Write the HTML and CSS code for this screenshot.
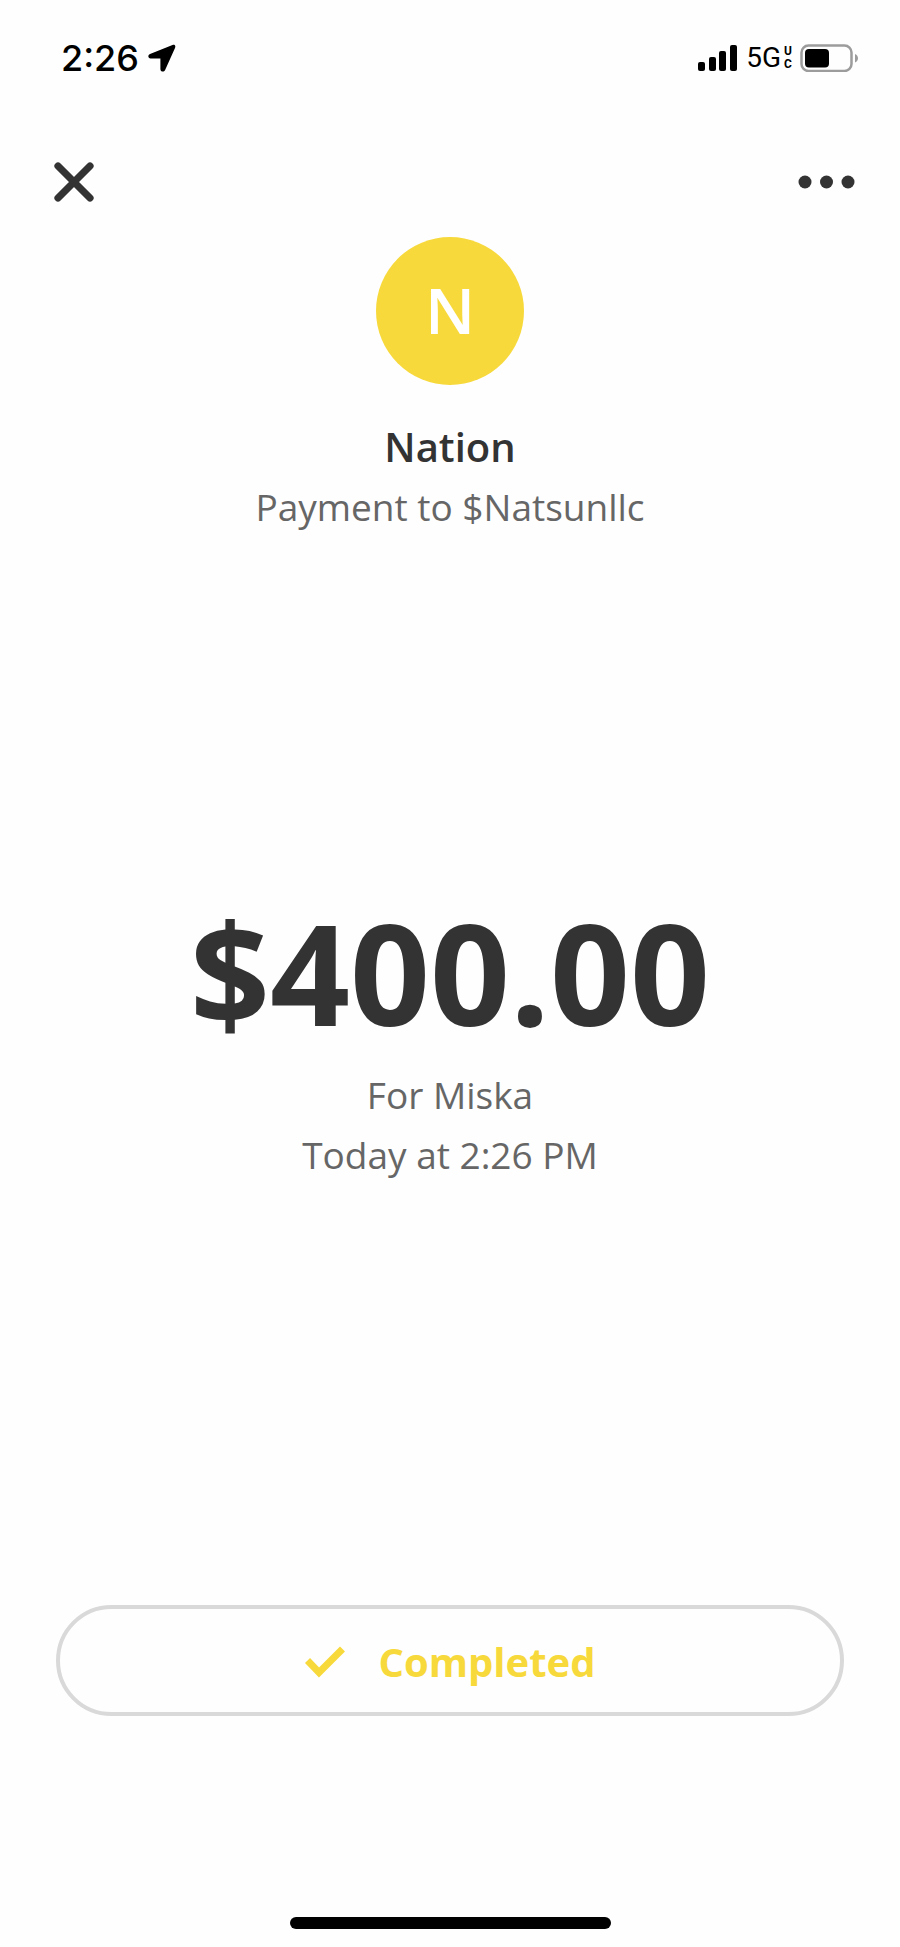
FILE: index.html
```html
<!DOCTYPE html>
<html lang="en">
<head>
<meta charset="utf-8">
<meta name="viewport" content="width=device-width, initial-scale=1">
<title>Payment to $Natsunllc</title>
<link rel="stylesheet" href="styles.css">
</head>
<body>
<div class="screen">
  <div class="status">
    <div class="status-side">
      <span class="clock">2:26</span>
      <svg class="location" width="28" height="28" viewBox="0 0 28 28" aria-hidden="true"><path d="M24.500 1 2 10C-.6 11 0 14.600 2.600 14.600H12.400V25C12.400 28 16 28.400 17 26.200L27 4C28 1.600 26.500.2 24.500 1Z"/></svg>
    </div>
    <div class="status-side status-right">
      <svg width="40" height="28" viewBox="0 0 40 28" aria-hidden="true"><rect y="18" width="7" height="9" rx="2"/><rect x="11" y="13" width="7" height="14" rx="2"/><rect x="21" y="7" width="7" height="20" rx="2"/><rect x="32" y="1" width="7" height="26" rx="2"/></svg>
      <div class="network"><span>5G</span><span class="network-sub"><span>U</span><span>C</span></span></div>
      <svg width="60" height="28" viewBox="0 0 60 28" aria-hidden="true"><rect x="1.500" y="1.500" width="50" height="25.500" rx="7" fill="none" stroke="#9c9c9c" stroke-width="2.500"/><rect x="5" y="5" width="24" height="18.500" rx="4"/><path d="M55 10c4 1.500 4 7 0 8.500Z" fill="#9c9c9c"/></svg>
    </div>
  </div>
  <header class="toolbar">
    <button class="icon-button" type="button" aria-label="Close"><svg width="40" height="40" viewBox="0 0 40 40"><path d="M4 4 36 36M36 4 4 36" stroke="#333" stroke-width="7.200" stroke-linecap="round"/></svg></button>
    <button class="icon-button" type="button" aria-label="More options"><svg width="58" height="40" viewBox="0 0 58 40" fill="#333"><circle cx="7" cy="20" r="6.500"/><circle cx="28.500" cy="20" r="6.500"/><circle cx="50" cy="20" r="6.500"/></svg></button>
  </header>
  <main class="content">
    <section class="recipient">
      <div class="avatar" aria-hidden="true">N</div>
      <h1 class="name">Nation</h1>
      <p class="detail">Payment to $Natsunllc</p>
    </section>
    <section class="payment">
      <p class="amount">$400.00</p>
      <p class="detail">For Miska</p>
      <p class="detail">Today at 2:26 PM</p>
    </section>
    <button class="completed" type="button">
      <svg width="40" height="32" viewBox="0 0 40 32" aria-hidden="true"><path d="M2.500 14.500 14 26.500 37.500 3" fill="none" stroke="#f7d93b" stroke-width="7"/></svg>
      <span>Completed</span>
    </button>
  </main>
  <div class="home-bar"></div>
</div>
</body>
</html>
```
FILE: styles.css
```css
* { box-sizing: border-box; }

body {
  margin: 0;
  background: #fefefe;
  color: #333;
  font-family: "Open Sans", "Noto Sans", sans-serif;
}

h1, p { margin: 0; }

button {
  border: 0;
  background: none;
  padding: 0;
  font: inherit;
  cursor: pointer;
}

svg { display: block; flex: none; }

.screen {
  display: flex;
  flex-direction: column;
  min-height: 100vh;
  padding-bottom: 18px;
}

.status {
  display: flex;
  justify-content: space-between;
  padding: 38px 40px 0 61px;
  color: #000;
  font-family: Inter, sans-serif;
}

.status-side {
  display: flex;
  align-items: center;
  height: 40px;
  gap: 9px;
}

.status-right { gap: 8px; }

.clock {
  font-size: 36px;
  font-weight: 500;
  line-height: 40px;
}

.network {
  display: flex;
  align-items: center;
  gap: 3px;
  font-family: Roboto, sans-serif;
  font-size: 28px;
  font-weight: 400;
  line-height: 28px;
}

.network-sub {
  display: flex;
  flex-direction: column;
  font-size: 12px;
  font-weight: 700;
  line-height: 13px;
}

.toolbar {
  display: flex;
  justify-content: space-between;
  padding: 84px 44px 0 54px;
}

.content {
  display: flex;
  flex: 1;
  flex-direction: column;
  padding: 35px 56px 0;
  text-align: center;
}

.avatar {
  width: 148px;
  height: 148px;
  margin: 0 auto 32px;
  border-radius: 50%;
  background: #f7d93b;
  color: #fff;
  font-size: 64px;
  font-weight: 600;
  line-height: 146px;
}

.name {
  font-size: 40px;
  font-weight: 600;
  line-height: 60px;
}

.detail {
  color: #666;
  font-size: 37px;
  line-height: 60px;
}

.payment {
  display: flex;
  flex: 1;
  flex-direction: column;
  justify-content: center;
  padding-bottom: 66px;
}

.amount {
  margin-bottom: 13px;
  font-size: 140px;
  font-weight: 700;
  line-height: 160px;
}

.completed {
  display: flex;
  align-items: center;
  justify-content: center;
  gap: 34px;
  margin-bottom: 201px;
  padding: 22px 0 20px;
  border: 4px solid #d9d9d9;
  border-radius: 56px;
  color: #f7d93b;
  font-size: 40px;
  font-weight: 700;
  line-height: 61px;
}

.home-bar {
  width: 36%;
  max-width: 321px;
  height: 12px;
  margin: 0 auto;
  border-radius: 6px;
  background: #000;
}
```
